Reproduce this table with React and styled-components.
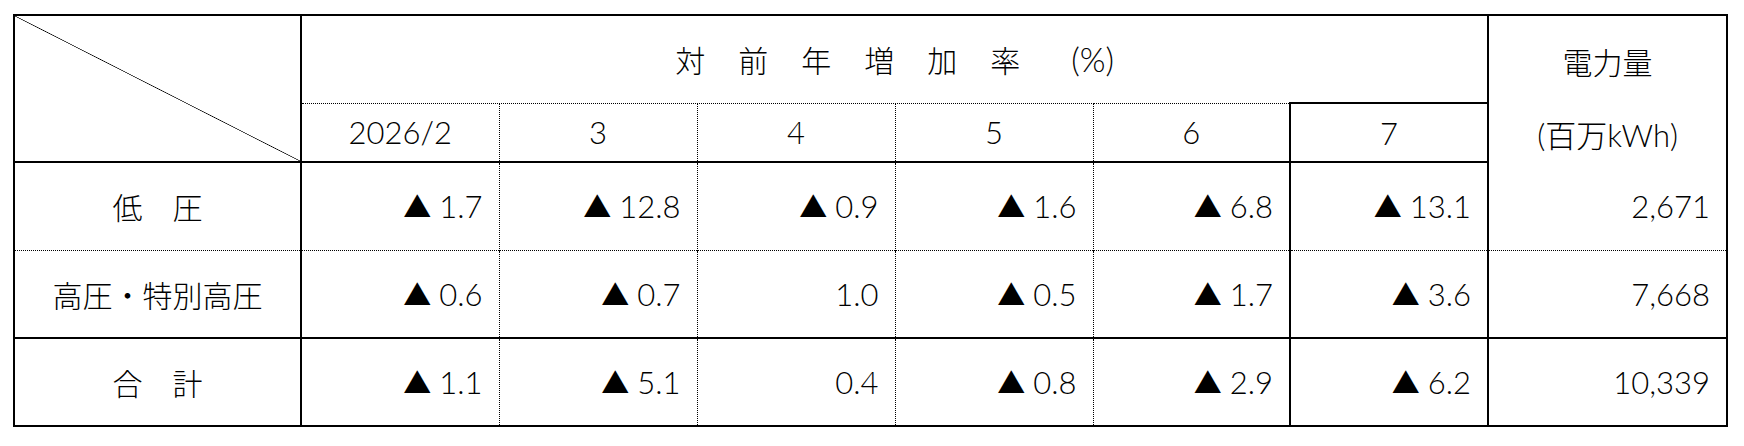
import React from 'react'
import styled, { createGlobalStyle } from 'styled-components'

const GlobalStyle = createGlobalStyle`
  html, body {
    margin: 0;
    padding: 0;
    background: #ffffff;
  }
  body {
    font-family: Lato, "Noto Sans CJK JP", sans-serif;
    color: #000000;
  }
`

const Page = styled.div`
  padding: 14px 0 0 13px;
`

const Table = styled.table`
  border-collapse: collapse;
  table-layout: fixed;
  width: 1714px;
  border: 2px solid #000;
`

const HeadRow = styled.tr`
  height: ${(p) => p.h}px;
`

const Corner = styled.th`
  border-right: 2px solid #000;
  border-bottom: 2px solid #000;
  padding: 0;
  background: linear-gradient(
    to top right,
    transparent calc(50% - 0.7px),
    #000 50%,
    transparent calc(50% + 0.7px)
  );
`

const TitleCell = styled.th`
  border-bottom: 1px dotted #000;
  font-weight: 300;
  padding: 0;
  text-align: center;
`

const Title = styled.span`
  font-family: "Noto Sans CJK JP", sans-serif;
  font-weight: 300;
  font-size: 30px;
  letter-spacing: 33px;
`

const Percent = styled.span`
  font-family: Lato, sans-serif;
  font-size: 33px;
  font-weight: 300;
  margin-left: 18px;
`

const UnitCell = styled.th`
  border-left: 2px solid #000;
  font-weight: 300;
  padding: 0;
  text-align: center;
  vertical-align: top;
`

const UnitName = styled.div`
  font-family: "Noto Sans CJK JP", sans-serif;
  font-weight: 300;
  font-size: 30px;
  line-height: 30px;
  padding-top: 30px;
`

const UnitSub = styled.div`
  font-family: Lato, "Noto Sans CJK JP", sans-serif;
  font-size: 31px;
  line-height: 30px;
  padding-top: 44px;
  font-weight: 300;
`

const MonthCell = styled.th`
  border-bottom: 2px solid #000;
  border-left: ${(p) => (p.solid ? '2px solid #000' : '1px dotted #000')};
  border-right: ${(p) => (p.edge ? '2px solid #000' : '1px dotted #000')};
  border-top: ${(p) => (p.solid ? '2px solid #000' : '1px dotted #000')};
  font-family: Lato, sans-serif;
  font-weight: 300;
  font-size: 31px;
  padding: 0;
  text-align: center;
`

const Row = styled.tr`
  height: 88px;
  border-bottom: ${(p) => (p.dotted ? '1px dotted #000' : '2px solid #000')};
`

const Label = styled.td`
  border-right: 2px solid #000;
  font-family: "Noto Sans CJK JP", sans-serif;
  font-weight: 300;
  font-size: 30px;
  text-align: center;
  padding: 0;
`

const Value = styled.td`
  border-left: ${(p) => (p.solid ? '2px solid #000' : '1px dotted #000')};
  border-right: ${(p) => (p.edge ? '2px solid #000' : '1px dotted #000')};
  font-family: Lato, sans-serif;
  font-weight: 300;
  font-size: 31px;
  text-align: right;
  padding: 0 16px 0 0;
  white-space: nowrap;
`

const Mark = styled.span`
  font-family: "Noto Sans CJK JP", sans-serif;
  font-size: 28px;
  margin-right: 8px;
`

const months = ['2026/2', '3', '4', '5', '6', '7']

const rows = [
  { label: '低　圧', values: ['-1.7', '-12.8', '-0.9', '-1.6', '-6.8', '-13.1'], total: '2,671', dotted: true },
  { label: '高圧・特別高圧', values: ['-0.6', '-0.7', '1.0', '-0.5', '-1.7', '-3.6'], total: '7,668' },
  { label: '合　計', values: ['-1.1', '-5.1', '0.4', '-0.8', '-2.9', '-6.2'], total: '10,339' },
]

// "-" prefix means a decrease, shown with ▲
const Num = ({ v }) => {
  if (v.startsWith('-')) {
    return (
      <>
        <Mark>▲</Mark>
        {v.slice(1)}
      </>
    )
  }
  return v
}

export default function App() {
  return (
    <Page>
      <GlobalStyle />
      <Table>
        <colgroup>
          <col style={{ width: 287 }} />
          <col style={{ width: 198 }} />
          <col style={{ width: 198 }} />
          <col style={{ width: 198 }} />
          <col style={{ width: 198 }} />
          <col style={{ width: 197 }} />
          <col style={{ width: 198 }} />
          <col style={{ width: 239 }} />
        </colgroup>
        <thead>
          <HeadRow h={88}>
            <Corner rowSpan={2} />
            <TitleCell colSpan={6}>
              <Title>対前年増加率</Title>
              <Percent>(%)</Percent>
            </TitleCell>
            <UnitCell rowSpan={2}>
              <UnitName>電力量</UnitName>
              <UnitSub>(百万kWh)</UnitSub>
            </UnitCell>
          </HeadRow>
          <HeadRow h={59}>
            {months.map((m, i) => (
              <MonthCell key={m} solid={i === 5} edge={i >= 4}>
                {m}
              </MonthCell>
            ))}
          </HeadRow>
        </thead>
        <tbody>
          {rows.map((r) => (
            <Row key={r.label} dotted={r.dotted}>
              <Label>{r.label}</Label>
              {r.values.map((v, i) => (
                <Value key={i} solid={i === 5} edge={i >= 4}>
                  <Num v={v} />
                </Value>
              ))}
              <Value solid edge>{r.total}</Value>
            </Row>
          ))}
        </tbody>
      </Table>
    </Page>
  )
}
